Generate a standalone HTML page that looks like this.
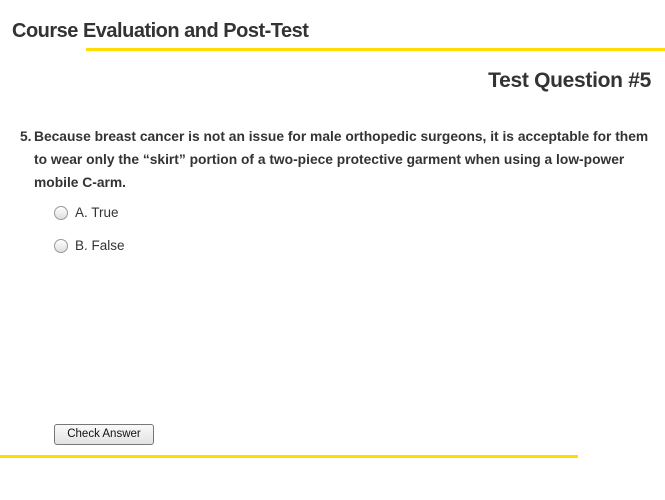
<!DOCTYPE html>
<html><head><meta charset="utf-8"><style>
body{margin:0;width:665px;height:500px;background:#fff;position:relative;overflow:hidden;font-family:"Liberation Sans",sans-serif;color:#333;}
.a{position:absolute;white-space:nowrap;}
#t1{left:12px;top:20px;font-size:20px;font-weight:bold;letter-spacing:-0.5px;}
#l1{left:86px;top:48px;width:579px;height:3px;background:#ffdd00;}
#t2{right:14px;top:69px;font-size:21px;font-weight:bold;letter-spacing:-0.3px;}
.q{font-size:13.8px;font-weight:bold;color:#333;}
.r{width:12px;height:12px;border:1px solid #999;border-radius:50%;background:linear-gradient(#fff,#ddd);}
.o{font-size:13.5px;color:#333;}
#btn{left:54px;top:424px;width:98px;height:19px;border:1px solid #777;border-radius:3px;background:linear-gradient(#fafafa,#e2e2e2);font-size:11.5px;color:#111;text-align:center;line-height:19px;}
#l2{left:0;top:455px;width:578px;height:3px;background:#ffdd00;}
</style></head><body>
<div class="a" id="t1">Course Evaluation and Post-Test</div>
<div class="a" id="l1"></div>
<div class="a" id="t2">Test Question #5</div>
<div class="a q" style="left:20px;top:129px">5.</div>
<div class="a q" style="left:34px;top:129px">Because breast cancer is not an issue for male orthopedic surgeons, it is acceptable for them</div>
<div class="a q" style="left:34px;top:152px">to wear only the “skirt” portion of a two-piece protective garment when using a low-power</div>
<div class="a q" style="left:34px;top:175px">mobile C-arm.</div>
<div class="a r" style="left:54px;top:206px"></div>
<div class="a o" style="left:75px;top:205px">A. True</div>
<div class="a r" style="left:54px;top:239px"></div>
<div class="a o" style="left:75px;top:238px">B. False</div>
<div class="a" id="btn">Check Answer</div>
<div class="a" id="l2"></div>
</body></html>
